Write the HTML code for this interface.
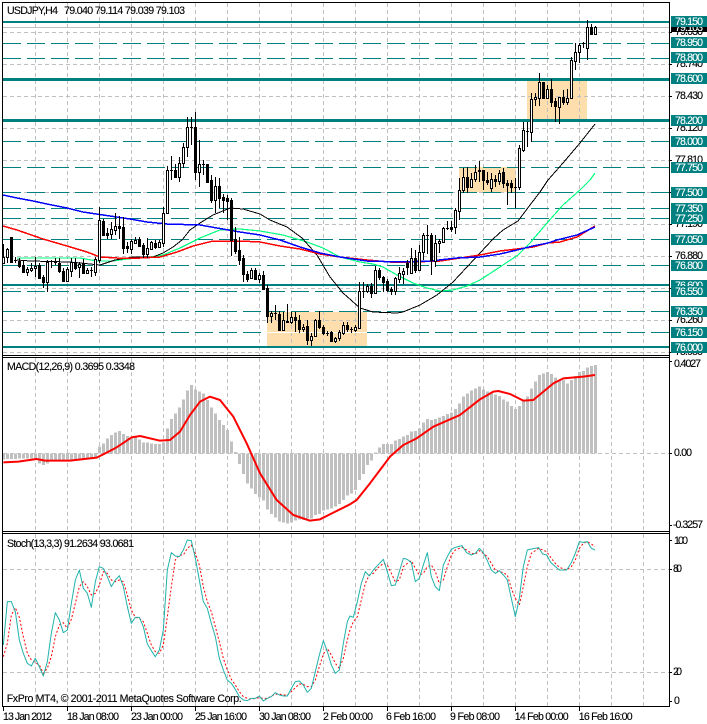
<!DOCTYPE html>
<html lang="en">
<head>
<meta charset="utf-8">
<title>USDJPY,H4</title>
<style>
html,body{margin:0;padding:0;background:#fff;width:707px;height:724px;overflow:hidden}
svg{display:block;position:absolute;left:0;top:0}
text{font-family:"Liberation Sans",sans-serif;font-size:10.6px;fill:#000;stroke:#000;stroke-width:.12px}
.l{fill:#fff;stroke:#fff}
.s{fill:none;vector-effect:non-scaling-stroke;stroke-linejoin:round}
</style>
</head>
<body>
<svg width="707" height="724" viewBox="0 0 707 724" xmlns="http://www.w3.org/2000/svg">
<rect width="707" height="724" fill="#fff"/>

<!-- boxes -->
<g fill="#FFDEAD">
<rect x="267" y="312" width="100" height="34"/>
<rect x="459" y="167" width="57" height="25"/>
<rect x="527" y="81" width="60" height="38"/>
</g>

<!-- grid -->
<g stroke="#c0c0c0" stroke-width="1" stroke-dasharray="4 3" fill="none" shape-rendering="crispEdges">
<path d="M35.5 3V355M67.5 3V355M99.5 3V355M131.5 3V355M163.5 3V355M195.5 3V355M227.5 3V355M259.5 3V355M291.5 3V355M323.5 3V355M355.5 3V355M387.5 3V355M419.5 3V355M451.5 3V355M483.5 3V355M515.5 3V355M547.5 3V355M579.5 3V355M611.5 3V355M643.5 3V355"/>
<path d="M35.5 358V531M67.5 358V531M99.5 358V531M131.5 358V531M163.5 358V531M195.5 358V531M227.5 358V531M259.5 358V531M291.5 358V531M323.5 358V531M355.5 358V531M387.5 358V531M419.5 358V531M451.5 358V531M483.5 358V531M515.5 358V531M547.5 358V531M579.5 358V531M611.5 358V531M643.5 358V531"/>
<path d="M35.5 534V706M67.5 534V706M99.5 534V706M131.5 534V706M163.5 534V706M195.5 534V706M227.5 534V706M259.5 534V706M291.5 534V706M323.5 534V706M355.5 534V706M387.5 534V706M419.5 534V706M451.5 534V706M483.5 534V706M515.5 534V706M547.5 534V706M579.5 534V706M611.5 534V706M643.5 534V706"/>
<path d="M3 32.5H669M3 64.5H669M3 96.5H669M3 128.5H669M3 160.5H669M3 192.5H669M3 224.5H669M3 256.5H669M3 288.5H669M3 320.5H669M3 352.5H669"/>
<path d="M3 453.5H669M3 569.5H669M3 672.5H669"/>
</g>

<!-- price lines -->
<path d="M3 27.5H669" stroke="#c0c0c0" stroke-width="1" shape-rendering="crispEdges"/>
<g fill="#008080">
<rect x="3" y="21" width="666" height="2"/>
<rect x="3" y="78" width="666" height="3"/>
<rect x="3" y="119" width="666" height="3"/>
<rect x="3" y="284" width="666" height="2"/>
<rect x="3" y="346" width="666" height="2"/>
</g>
<path d="M3 43.5H669M3 58.5H669M3 141.5H669M3 167.5H669M3 192.5H669M3 208.5H669M3 218.5H669M3 239.5H669M3 265.5H669M3 291.5H669M3 311.5H669M3 332.5H669" stroke="#008080" stroke-width="1" stroke-dasharray="18 6" fill="none" shape-rendering="crispEdges"/>
<rect x="267" y="332" width="100" height="1" fill="#fff"/>

<!-- moving averages -->
<g fill="none" stroke-width="1" shape-rendering="crispEdges">
<polyline stroke="#00ff7f" stroke-width="1.2" points="17,258 80,258 97,261 113,261 127,259 150,257 163,255 180,248 200,238 220,230 240,229 260,231 283,235 307,242 323,248 340,257 360,262 373,264 383,267 397,275 413,283 427,288 440,291 453,290 467,286 480,280 500,267 518,255 530,243 547,223 563,205 580,190 590,180 595,173"/>
<polyline stroke="#000" points="17,260 30,261 70,262 100,265 115,260 133,257 153,257 163,253 173,247 182,240 190,230 200,223 213,215 230,208 243,209 260,214 270,220 287,227 302,238 317,255 330,277 343,293 360,308 373,312 397,313 403,312 420,305 437,295 453,282 467,267 480,253 493,239 503,230 518,221 530,205 540,192 548,180 563,163 580,143 595,124"/>
<polyline stroke="#ff0000" stroke-width="1.5" points="3,226 17,230 43,239 67,246 87,252 100,257 117,258 140,258 160,257 177,252 193,246 213,241 240,241 260,242 280,246 300,249 320,254 340,257 367,260 390,262 410,262 440,261 460,258 480,255 500,251 517,249 533,247 548,243 560,242 577,237 595,226"/>
<polyline stroke="#0000ff" stroke-width="1.5" points="3,195 17,198 33,201 47,204 67,208 83,212 110,216 130,219 147,222 167,224 200,225 217,228 240,232 260,235 280,240 300,247 320,253 340,257 367,261 400,262 430,261 457,258 480,257 500,254 517,250 533,246 548,243 557,240 577,235 595,227"/>
</g>

<!-- candles -->
<g shape-rendering="crispEdges">
<path fill="none" stroke="#000" d="M3.5 244V263M7.5 248V263M11.5 237V263M15.5 257V263M19.5 258V268M23.5 261V273M27.5 267V276M31.5 263V272M35.5 257V277M39.5 263V279M43.5 275V288M47.5 260V292M51.5 260V268M55.5 258V265M59.5 258V273M63.5 268V282M67.5 267V281M71.5 258V277M75.5 258V270M79.5 262V278M83.5 259V274M87.5 268V274M91.5 267V277M95.5 257V276M99.5 207V263M103.5 219V236M107.5 228V239M111.5 222V239M115.5 213V235M119.5 216V239M123.5 217V254M127.5 242V253M131.5 239V254M135.5 237V244M139.5 237V247M143.5 243V258M147.5 238V258M151.5 241V250M155.5 240V249M159.5 240V248M163.5 207V247M167.5 166V214M171.5 156V180M175.5 164V178M179.5 157V182M183.5 143V168M187.5 117V157M191.5 117V145M195.5 112V180M199.5 140V187M203.5 160V175M207.5 164V182M211.5 175V203M215.5 177V213M219.5 178V208M223.5 194V213M227.5 195V220M231.5 198V256M235.5 227V254M239.5 237V265M243.5 255V282M247.5 271V282M251.5 268V279M255.5 268V280M259.5 273V283M263.5 271V289M267.5 285V323M271.5 311V323M275.5 305V320M279.5 311V331M283.5 312V331M287.5 304V323M291.5 312V324M295.5 312V332M299.5 315V333M303.5 324V332M307.5 320V345M311.5 333V346M315.5 319V337M319.5 311V329M323.5 325V335M327.5 331V336M331.5 331V341M335.5 337V343M339.5 330V341M343.5 322V335M347.5 322V332M351.5 327V333M355.5 325V332M359.5 282V328M363.5 282V298M367.5 284V293M371.5 283V298M375.5 266V293M379.5 268V280M383.5 276V292M387.5 279V292M391.5 287V295M395.5 277V295M399.5 267V283M403.5 268V284M407.5 260V275M411.5 248V274M415.5 250V273M419.5 245V271M423.5 233V260M427.5 225V254M431.5 233V275M435.5 235V267M439.5 239V253M443.5 227V243M447.5 221V230M451.5 221V232M455.5 208V234M459.5 178V220M463.5 168V193M467.5 167V193M471.5 173V188M475.5 165V182M479.5 161V182M483.5 170V190M487.5 172V185M491.5 173V192M495.5 175V187M499.5 170V185M503.5 168V188M507.5 180V205M511.5 180V193M515.5 178V208M519.5 145V190M523.5 122V152M527.5 122V147M531.5 93V142M535.5 93V106M539.5 73V106M543.5 82V98M547.5 85V99M551.5 79V107M555.5 98V122M559.5 97V124M563.5 90V105M567.5 89V105M571.5 57V99M575.5 43V70M579.5 43V63M583.5 42V48M587.5 20V60M591.5 24V34M595.5 26V35"/>
<path fill="#fff" stroke="#000" d="M2.5 257.5h2v6h-2zM6.5 249.5h2v8h-2zM26.5 269.5h2v3h-2zM30.5 268.5h2v2h-2zM34.5 266.5h2v2h-2zM46.5 262.5h2v20h-2zM66.5 269.5h2v12h-2zM70.5 262.5h2v9h-2zM78.5 264.5h2v3h-2zM86.5 270.5h2v3h-2zM94.5 259.5h2v13h-2zM98.5 220.5h2v40h-2zM110.5 229.5h2v5h-2zM114.5 226.5h2v4h-2zM130.5 241.5h2v8h-2zM134.5 240.5h2v3h-2zM146.5 248.5h2v6h-2zM150.5 242.5h2v7h-2zM158.5 242.5h2v5h-2zM162.5 213.5h2v30h-2zM166.5 170.5h2v43h-2zM178.5 163.5h2v14h-2zM182.5 147.5h2v16h-2zM186.5 127.5h2v20h-2zM198.5 164.5h2v8h-2zM214.5 186.5h2v14h-2zM250.5 270.5h2v8h-2zM258.5 275.5h2v4h-2zM270.5 313.5h2v3h-2zM282.5 320.5h2v10h-2zM290.5 317.5h2v5h-2zM302.5 327.5h2v2h-2zM310.5 336.5h2v4h-2zM314.5 320.5h2v16h-2zM334.5 338.5h2v3h-2zM338.5 332.5h2v6h-2zM342.5 325.5h2v8h-2zM354.5 327.5h2v3h-2zM358.5 291.5h2v37h-2zM366.5 286.5h2v5h-2zM374.5 270.5h2v23h-2zM394.5 278.5h2v13h-2zM398.5 273.5h2v6h-2zM402.5 271.5h2v3h-2zM410.5 258.5h2v15h-2zM418.5 252.5h2v18h-2zM422.5 235.5h2v17h-2zM434.5 243.5h2v18h-2zM438.5 241.5h2v2h-2zM442.5 228.5h2v14h-2zM454.5 210.5h2v17h-2zM458.5 190.5h2v21h-2zM462.5 177.5h2v13h-2zM470.5 179.5h2v8h-2zM474.5 172.5h2v7h-2zM490.5 179.5h2v9h-2zM498.5 173.5h2v8h-2zM518.5 148.5h2v39h-2zM522.5 130.5h2v20h-2zM530.5 99.5h2v33h-2zM534.5 97.5h2v2h-2zM538.5 82.5h2v16h-2zM546.5 89.5h2v9h-2zM558.5 97.5h2v10h-2zM566.5 98.5h2v4h-2zM570.5 60.5h2v38h-2zM574.5 52.5h2v9h-2zM578.5 45.5h2v7h-2zM586.5 27.5h2v21h-2zM594.5 27.5h2v7h-2z"/>
<path fill="#000" stroke="#000" d="M10.5 237.5h2v25h-2zM18.5 261.5h2v5h-2zM22.5 265.5h2v7h-2zM38.5 265.5h2v13h-2zM42.5 277.5h2v5h-2zM58.5 263.5h2v8h-2zM62.5 271.5h2v10h-2zM74.5 263.5h2v5h-2zM82.5 263.5h2v10h-2zM102.5 221.5h2v14h-2zM106.5 233.5h2v2h-2zM118.5 226.5h2v2h-2zM122.5 227.5h2v21h-2zM126.5 246.5h2v2h-2zM138.5 239.5h2v7h-2zM142.5 245.5h2v9h-2zM154.5 243.5h2v4h-2zM174.5 170.5h2v7h-2zM194.5 127.5h2v45h-2zM206.5 164.5h2v18h-2zM210.5 180.5h2v20h-2zM218.5 186.5h2v12h-2zM222.5 197.5h2v3h-2zM226.5 198.5h2v3h-2zM230.5 200.5h2v40h-2zM234.5 239.5h2v12h-2zM238.5 250.5h2v10h-2zM242.5 258.5h2v16h-2zM246.5 274.5h2v5h-2zM254.5 270.5h2v9h-2zM262.5 275.5h2v14h-2zM266.5 288.5h2v28h-2zM278.5 314.5h2v16h-2zM286.5 321.5h2v1h-2zM294.5 317.5h2v3h-2zM298.5 320.5h2v9h-2zM306.5 326.5h2v14h-2zM318.5 320.5h2v7h-2zM322.5 327.5h2v6h-2zM330.5 332.5h2v9h-2zM346.5 325.5h2v4h-2zM370.5 286.5h2v7h-2zM378.5 270.5h2v7h-2zM382.5 277.5h2v5h-2zM386.5 281.5h2v9h-2zM390.5 289.5h2v2h-2zM406.5 263.5h2v4h-2zM414.5 258.5h2v12h-2zM430.5 235.5h2v25h-2zM450.5 227.5h2v2h-2zM466.5 177.5h2v10h-2zM478.5 170.5h2v1h-2zM482.5 170.5h2v10h-2zM486.5 180.5h2v2h-2zM494.5 179.5h2v2h-2zM502.5 172.5h2v11h-2zM506.5 183.5h2v2h-2zM510.5 183.5h2v4h-2zM542.5 82.5h2v16h-2zM550.5 89.5h2v13h-2zM554.5 101.5h2v5h-2zM562.5 97.5h2v5h-2zM590.5 27.5h2v7h-2zM14 260.5h3M50 261.5h3M54 262.5h3M90 270.5h3M170 170.5h3M190 127.5h3M202 164.5h3M274 313.5h3M326 333.5h3M350 329.5h3M362 291.5h3M426 235.5h3M446 228.5h3M514 187.5h3M526 131.5h3M582 43.5h3"/>
</g>

<!-- MACD histogram (y in 3x crop units) -->
<g transform="translate(0,350) scale(1,.33333)" shape-rendering="crispEdges">
<path fill="none" stroke="#c0c0c0" stroke-width="3" d="M3.5 310V328M7.5 310V327M11.5 310V327M15.5 310V327M19.5 310V326M23.5 310V325M27.5 310V326M31.5 310V326M35.5 310V326M39.5 310V340M43.5 310V345M47.5 310V340M51.5 310V332M55.5 310V332M59.5 310V332M63.5 310V332M67.5 310V332M71.5 310V328M75.5 310V328M79.5 310V328M83.5 310V326M87.5 310V326M91.5 310V326M95.5 310V325M99.5 310V290M103.5 310V280M107.5 310V265M111.5 310V255M115.5 310V247M119.5 310V243M123.5 310V252M127.5 310V258M131.5 310V262M135.5 310V262M139.5 310V268M143.5 310V277M147.5 310V278M151.5 310V280M155.5 310V282M159.5 310V282M163.5 310V278M167.5 310V235M171.5 310V207M175.5 310V190M179.5 310V172M183.5 310V148M187.5 310V122M191.5 310V105M195.5 310V118M199.5 310V125M203.5 310V130M207.5 310V150M211.5 310V172M215.5 310V190M219.5 310V210M223.5 310V225M227.5 310V240M231.5 310V275M235.5 310V306M239.5 310V342M243.5 310V372M247.5 310V400M251.5 310V415M255.5 310V432M259.5 310V442M263.5 310V452M267.5 310V478M271.5 310V492M275.5 310V502M279.5 310V515M283.5 310V518M287.5 310V520M291.5 310V518M295.5 310V512M299.5 310V508M303.5 310V510M307.5 310V505M311.5 310V505M315.5 310V495M319.5 310V492M323.5 310V482M327.5 310V478M331.5 310V475M335.5 310V470M339.5 310V462M343.5 310V450M347.5 310V437M351.5 310V430M355.5 310V420M359.5 310V390M363.5 310V372M367.5 310V345M371.5 310V332M375.5 310V307M379.5 310V292M383.5 310V282M387.5 310V282M391.5 310V282M395.5 310V272M399.5 310V267M403.5 310V260M407.5 310V255M411.5 310V245M415.5 310V243M419.5 310V235M423.5 310V218M427.5 310V207M431.5 310V210M435.5 310V207M439.5 310V203M443.5 310V198M447.5 310V192M451.5 310V188M455.5 310V177M459.5 310V160M463.5 310V140M467.5 310V130M471.5 310V122M475.5 310V115M479.5 310V110M483.5 310V118M487.5 310V125M491.5 310V130M495.5 310V133M499.5 310V138M503.5 310V148M507.5 310V155M511.5 310V168M515.5 310V177M519.5 310V168M523.5 310V150M527.5 310V140M531.5 310V115M535.5 310V95M539.5 310V75M543.5 310V70M547.5 310V66M551.5 310V72M555.5 310V82M559.5 310V90M563.5 310V90M567.5 310V100M571.5 310V90M575.5 310V78M579.5 310V66M583.5 310V63M587.5 310V52M591.5 310V48M595.5 310V45"/>
</g>

<!-- MACD signal -->
<g transform="translate(0,350) scale(.33333)">
<polyline class="s" stroke="#ff0000" stroke-width="2" points="10,337 55,335 110,327 135,332 210,332 290,323 320,308 350,292 395,262 420,258 480,272 510,270 540,245 570,195 600,155 630,140 660,150 700,200 740,280 780,370 830,450 880,495 930,512 960,508 1000,488 1050,463 1070,450 1110,400 1170,320 1210,285 1250,265 1300,230 1380,195 1440,148 1480,125 1495,123 1530,132 1570,152 1600,150 1660,100 1690,85 1750,80 1785,75"/>
</g>

<!-- Stochastic -->
<g transform="translate(0,530) scale(.33333)" stroke-width="1">
<polyline class="s" stroke="#ff0000" stroke-dasharray="2 2" points="10,380 22,340 34,255 46,233 58,262 70,320 82,370 94,390 106,398 118,405 130,430 142,415 154,380 166,320 178,285 190,278 202,295 214,268 226,220 238,170 250,155 262,170 274,195 286,190 298,165 310,125 322,130 334,150 346,155 358,150 370,155 382,195 394,240 406,262 418,265 430,275 442,310 454,345 466,365 478,370 490,345 502,260 514,170 526,90 538,75 550,75 562,55 574,45 586,70 598,105 610,170 622,215 634,245 646,290 658,335 670,385 682,420 694,448 706,465 718,485 730,500 742,505 754,508 766,505 778,503 790,505 802,505 814,498 826,493 838,492 850,495 862,495 874,485 886,473 898,462 910,463 922,470 934,470 946,450 958,410 970,372 982,355 994,375 1006,400 1018,415 1030,385 1042,330 1050,300 1060,275 1072,260 1084,210 1096,160 1108,135 1120,130 1132,115 1150,100 1162,105 1174,130 1186,155 1198,150 1210,110 1222,100 1234,92 1246,115 1258,135 1270,130 1282,110 1294,105 1306,125 1318,160 1330,150 1342,110 1354,75 1366,60 1386,52 1400,60 1414,70 1426,72 1438,62 1450,70 1462,80 1474,100 1486,120 1498,125 1510,128 1522,135 1534,175 1546,205 1558,225 1570,170 1582,110 1594,70 1616,55 1628,60 1640,65 1652,82 1664,98 1678,112 1700,120 1714,110 1726,90 1738,55 1750,40 1762,35 1774,42 1785,50"/>
<polyline class="s" stroke="#20B2AA" points="10,345 22,215 34,215 46,245 58,330 70,370 82,400 94,408 106,385 118,410 130,438 142,395 154,310 166,248 178,270 190,308 202,300 214,220 226,150 238,120 250,175 262,190 274,232 286,155 298,110 310,115 322,140 334,170 346,150 358,137 370,170 382,230 394,280 406,262 418,262 430,290 442,342 454,362 466,380 478,360 490,300 502,120 514,68 526,78 538,80 550,60 562,30 574,32 586,85 598,150 610,215 622,235 634,280 646,320 658,385 670,420 682,450 694,460 706,478 718,500 730,510 742,512 754,505 766,505 778,498 790,513 802,505 814,500 826,488 838,495 850,498 862,498 874,475 886,455 898,453 910,465 922,487 934,475 946,425 958,375 970,332 982,365 994,405 1006,430 1018,420 1030,340 1042,275 1050,258 1060,262 1072,215 1084,160 1096,125 1108,138 1120,120 1132,107 1150,88 1162,125 1174,167 1186,165 1198,125 1210,85 1222,88 1234,98 1246,155 1258,145 1270,105 1282,68 1294,140 1306,170 1318,182 1330,105 1342,80 1354,58 1366,52 1386,47 1400,68 1414,75 1426,70 1438,55 1450,68 1462,92 1474,120 1486,130 1498,122 1510,135 1522,150 1534,205 1546,260 1558,205 1570,110 1582,60 1594,57 1616,53 1628,72 1640,75 1652,97 1664,108 1678,120 1700,120 1714,98 1726,70 1738,35 1750,37 1762,35 1774,55 1785,60"/>
</g>

<!-- frames -->
<g fill="none" stroke="#000" stroke-width="1" shape-rendering="crispEdges">
<path d="M2.5 2.5H669.5M2.5 355.5H669.5M2.5 357.5H669.5M2.5 531.5H669.5M2.5 533.5H669.5M2.5 706.5H669.5"/>
<path d="M2.5 2V707M669.5 2V707"/>
<path d="M669 32.5h3M669 64.5h3M669 96.5h3M669 128.5h3M669 160.5h3M669 192.5h3M669 224.5h3M669 256.5h3M669 288.5h3M669 320.5h3M669 352.5h3M669 361.5h3M669 453.5h3M669 525.5h3M669 540.5h3M669 569.5h3M669 672.5h3M669 701.5h3"/>
<path d="M3.5 707v4M67.5 707v4M131.5 707v4M195.5 707v4M259.5 707v4M323.5 707v4M387.5 707v4M451.5 707v4M515.5 707v4M579.5 707v4"/>
</g>

<!-- chart text -->
<text x="7" y="14" textLength="51">USDJPY,H4</text>
<text x="64" y="14" textLength="121">79.040 79.114 79.039 79.103</text>
<text x="7" y="370" textLength="128">MACD(12,26,9) 0.3695 0.3348</text>
<text x="7" y="547" textLength="127">Stoch(13,3,3) 91.2634 93.0681</text>
<text x="6.7" y="702" textLength="235">FxPro MT4, © 2001-2011 MetaQuotes Software Corp.</text>

<!-- time axis -->
<text x="3" y="720" textLength="49">13 Jan 2012</text>
<text x="67" y="720" textLength="52">18 Jan 08:00</text>
<text x="131" y="720" textLength="52">23 Jan 00:00</text>
<text x="195" y="720" textLength="52">25 Jan 16:00</text>
<text x="259" y="720" textLength="52">30 Jan 08:00</text>
<text x="323" y="720" textLength="50">2 Feb 00:00</text>
<text x="386" y="720" textLength="50">6 Feb 16:00</text>
<text x="450" y="720" textLength="50">9 Feb 08:00</text>
<text x="514.7" y="720" textLength="54">14 Feb 00:00</text>
<text x="578.7" y="720" textLength="54">16 Feb 16:00</text>

<!-- indicator axes -->
<text x="674" y="367" textLength="27">0.4027</text>
<text x="674" y="456" textLength="18">0.00</text>
<text x="673" y="528" textLength="30">-0.3257</text>
<text x="674" y="544" textLength="14">100</text>
<text x="673" y="572" textLength="9">80</text>
<text x="673" y="675" textLength="9">20</text>
<text x="674" y="704" textLength="4">0</text>

<!-- price axis grey values -->
<text x="675" y="35" textLength="28">79.030</text>
<text x="675" y="67" textLength="28">78.740</text>
<text x="675" y="99" textLength="28">78.430</text>
<text x="675" y="131" textLength="28">78.120</text>
<text x="675" y="163" textLength="28">77.810</text>
<text x="675" y="227" textLength="28">77.190</text>
<text x="675" y="259" textLength="28">76.880</text>
<text x="675" y="323" textLength="28">76.260</text>
<text x="675" y="355" textLength="28">75.950</text>

<!-- current price label -->
<rect x="671" y="27" width="36" height="5" fill="#000"/>
<text class="l" x="675" y="31" textLength="28">79.103</text>

<!-- level labels -->
<g fill="#008080">
<rect x="671" y="16" width="36" height="11"/>
<rect x="671" y="37" width="36" height="11"/>
<rect x="671" y="52" width="36" height="11"/>
<rect x="671" y="73" width="36" height="11"/>
<rect x="671" y="115" width="36" height="11"/>
<rect x="671" y="136" width="36" height="11"/>
<rect x="671" y="162" width="36" height="11"/>
<rect x="671" y="187" width="36" height="11"/>
<rect x="671" y="203" width="36" height="11"/>
<rect x="671" y="213" width="36" height="11"/>
<rect x="671" y="234" width="36" height="11"/>
<rect x="671" y="260" width="36" height="11"/>
<rect x="671" y="280" width="36" height="11"/>
<rect x="671" y="306" width="36" height="11"/>
<rect x="671" y="327" width="36" height="11"/>
<rect x="671" y="342" width="36" height="11"/>
</g>
<g>
<text class="l" x="675" y="25" textLength="28">79.150</text>
<text class="l" x="675" y="46" textLength="28">78.950</text>
<text class="l" x="675" y="61" textLength="28">78.800</text>
<text class="l" x="675" y="82" textLength="28">78.600</text>
<text class="l" x="675" y="124" textLength="28">78.200</text>
<text class="l" x="675" y="145" textLength="28">78.000</text>
<text class="l" x="675" y="171" textLength="28">77.750</text>
<text class="l" x="675" y="196" textLength="28">77.500</text>
<text class="l" x="675" y="212" textLength="28">77.350</text>
<text class="l" x="675" y="222" textLength="28">77.250</text>
<text class="l" x="675" y="243" textLength="28">77.050</text>
<text class="l" x="675" y="269" textLength="28">76.800</text>
<text class="l" x="675" y="289" textLength="28">76.600</text>
</g>
<rect x="671" y="286" width="36" height="11" fill="#008080"/>
<g>
<text class="l" x="675" y="295" textLength="28">76.550</text>
<text class="l" x="675" y="315" textLength="28">76.350</text>
<text class="l" x="675" y="336" textLength="28">76.150</text>
<text class="l" x="675" y="351" textLength="28">76.000</text>
</g>
</svg>
</body>
</html>
